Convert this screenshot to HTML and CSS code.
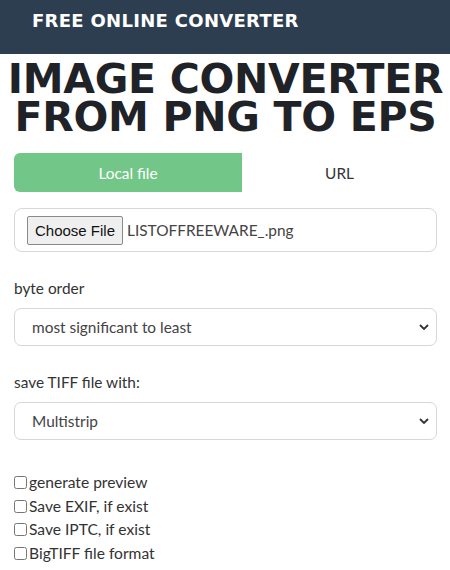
FILE: index.html
```html
<!DOCTYPE html>
<html lang="en">
<head>
    <meta charset="UTF-8">
    <meta name="viewport" content="width=device-width, initial-scale=1.0">
    <title>Image converter from PNG to EPS</title>
    <link rel="stylesheet" href="styles.css">
</head>
<body>
    <header class="topbar">
        <span class="brand">FREE ONLINE CONVERTER</span>
    </header>
    <main class="page">
        <h1 class="title">IMAGE CONVERTER<br>FROM PNG TO EPS</h1>

        <div class="tabs">
            <div class="tab active">Local file</div>
            <div class="tab">URL</div>
        </div>

        <div class="file-box">
            <button class="file-btn" type="button">Choose File</button>
            <span class="file-name">LISTOFFREEWARE_.png</span>
        </div>

        <div class="field">
            <label class="field-label" for="byte_order">byte order</label>
            <select id="byte_order" class="field-select">
                <option>most significant to least</option>
                <option>least significant to most</option>
            </select>
        </div>

        <div class="field">
            <label class="field-label" for="tiff_mode">save TIFF file with:</label>
            <select id="tiff_mode" class="field-select">
                <option>Multistrip</option>
                <option>Tiles</option>
            </select>
        </div>

        <div class="checks">
            <label class="check"><input type="checkbox"> generate preview</label>
            <label class="check"><input type="checkbox"> Save EXIF, if exist</label>
            <label class="check"><input type="checkbox"> Save IPTC, if exist</label>
            <label class="check"><input type="checkbox"> BigTIFF file format</label>
        </div>
    </main>
</body>
</html>
```

FILE: styles.css
```css
body {
    margin: 0;
    padding: 0;
    background-color: #fff;
    font-family: Lato, "Noto Sans", sans-serif;
    color: #333;
}

.topbar {
    background-color: #2d3e50;
    height: 54px;
    box-sizing: border-box;
    padding: 10px 0 0 32px;
}

.brand {
    color: #fff;
    font-family: "DejaVu Sans", sans-serif;
    font-weight: bold;
    font-size: 18px;
    letter-spacing: 0.3px;
}

.page {
    padding: 0 13px 0 14px;
}

.title {
    margin: 6px -14px 0 -14px;
    text-align: center;
    font-family: "DejaVu Sans", sans-serif;
    font-weight: bold;
    font-size: 41px;
    line-height: 38px;
    letter-spacing: -0.3px;
    color: #1f2328;
}

.tabs {
    display: flex;
    margin-top: 17px;
    height: 39px;
}

.tab {
    flex: 1;
    display: flex;
    align-items: center;
    justify-content: center;
    font-size: 15.4px;
    color: #333;
}

.tab.active {
    flex: 0 0 228px;
    background-color: #72c687;
    color: #fff;
    border-radius: 6px 0 0 6px;
}

.file-box {
    margin-top: 16px;
    height: 44px;
    box-sizing: border-box;
    border: 1px solid #d5d7da;
    border-radius: 8px;
    display: flex;
    align-items: center;
    padding-left: 12px;
    gap: 4px;
}

.file-btn {
    font-family: "Liberation Sans", Arial, sans-serif;
    font-size: 15px;
    color: #111;
    background-color: #efefef;
    border: 1px solid #8a8a8a;
    border-radius: 2px;
    height: 29px;
    padding: 0 7px;
}

.file-name {
    font-size: 15.4px;
    color: #444;
}

.field {
    margin-top: 24px;
}

.field-label {
    display: block;
    font-size: 15.4px;
    line-height: 24px;
    color: #333;
}

.field-select {
    display: block;
    width: 100%;
    height: 38px;
    margin-top: 8px;
    padding: 0 17px;
    border: 1px solid #d5d7da;
    border-radius: 7px;
    background-color: #fff;
    font-family: Lato, sans-serif;
    font-size: 15.4px;
    color: #444;
    appearance: none;
    background-image: url("data:image/svg+xml;utf8,<svg xmlns='http://www.w3.org/2000/svg' width='10' height='6' viewBox='0 0 10 6'><path d='M1 1l4 4 4-4' fill='none' stroke='%23333' stroke-width='1.8'/></svg>");
    background-repeat: no-repeat;
    background-position: right 7px center;
}

.checks {
    margin-top: 31px;
}

.check {
    display: flex;
    align-items: center;
    font-size: 15.6px;
    line-height: 23.5px;
    color: #333;
}

.check input {
    margin: 0 2px 0 0;
    width: 13px;
    height: 13px;
}
```
